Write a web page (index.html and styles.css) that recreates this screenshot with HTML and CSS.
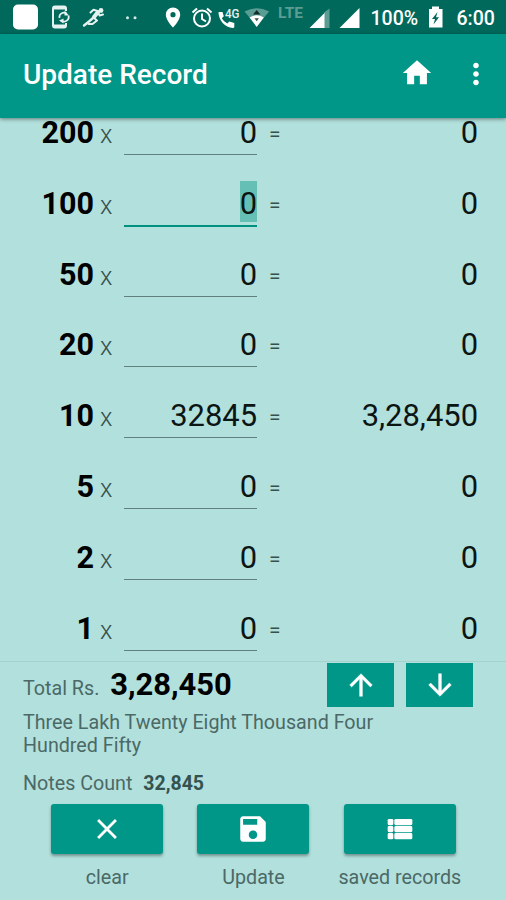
FILE: index.html
```html
<!DOCTYPE html>
<html lang="en">
<head>
    <meta charset="UTF-8">
    <meta name="viewport" content="width=device-width, initial-scale=1.0">
    <title>Update Record</title>
    <link rel="stylesheet" href="styles.css">
</head>
<body>
    <!-- status bar -->
    <div class="status-bar">
        <svg class="status-icons" width="506" height="34" viewBox="0 0 506 34">
            <rect x="13" y="4.5" width="25" height="25" rx="5" fill="#fff"/>
            <!-- phone sync -->
            <g fill="none" stroke="#e6f2f0" stroke-width="2">
                <path d="M66 11V8.500q0-2-2-2H55q-2 0-2 2V25.500q0 2 2 2h9q2 0 2-2V23"/>
                <path d="M53 8h13M53 26h13" stroke-width="3"/>
                <path d="M59.500 18a4.500 4.500 0 0 1 7-4.500M68.500 15.500a4.500 4.500 0 0 1-7 5" stroke-width="1.700"/>
            </g>
            <path d="M64.500 10.500v5h4.500zM63.500 18.500v5l-4.500-3z" fill="#e6f2f0"/>
            <!-- runner -->
            <g fill="none" stroke="#e6f2f0" stroke-linecap="round" stroke-linejoin="round">
                <path d="M90.500 12.500l3-2.800 4 1.300" stroke-width="2"/>
                <path d="M98 12l-4 5" stroke-width="4"/>
                <path d="M93 18l-4 3.500-5 4" stroke-width="2.400"/>
                <path d="M94 18l3 2.500-4.500 3.500h-4M98.500 13l1 2.500 3.500-1" stroke-width="2"/>
            </g>
            <circle cx="101" cy="10.500" r="2.400" fill="#e6f2f0"/>
            <circle cx="127.500" cy="17.800" r="1.500" fill="#d5e8e5"/>
            <circle cx="135" cy="17.800" r="1.500" fill="#d5e8e5"/>
            <!-- location -->
            <path fill="#fff" fill-rule="evenodd" d="M173 7.500a7.200 7.200 0 0 0-7.200 7.200c0 5.300 7.200 12.800 7.200 12.800s7.200-7.500 7.200-12.800A7.200 7.200 0 0 0 173 7.500zm0 4.600a2.600 2.600 0 1 1 0 5.200 2.600 2.600 0 0 1 0-5.200z"/>
            <!-- alarm -->
            <g fill="none" stroke="#fff" stroke-width="2">
                <circle cx="202" cy="18.500" r="8"/>
                <path d="M202 13.500v5.500l4 2.500M192.500 12.500l4.500-4M211.500 12.500l-4.500-4"/>
            </g>
            <!-- call on 4G -->
            <path fill="#fff" d="M219 12h3.500l1.300 4.200-2 2a13 13 0 0 0 5.500 5.300l2-2 5 1.500V27q0 1-1.500 1C225 27.500 219 20.500 218.500 13q0-1 .5-1z"/>
            <text class="net-4g" x="225" y="18" textLength="14.500" lengthAdjust="spacingAndGlyphs">4G</text>
            <!-- wifi -->
            <path fill="#5b9d93" d="M244.500 11.500q12.300-6.500 24.600 0l-5.500 6.500h-13.600z"/>
            <path fill="#fff" d="M249.500 17.500q7.200-4.500 14.400 0L256.700 27z"/>
            <path d="M253 14.500l3.700-4.500 3.700 4.500z" fill="#102d29"/>
            <path d="M254.500 18.300h4.400l-2.200 3z" fill="#38554f"/>
            <text class="net-lte" x="278" y="18" textLength="25" lengthAdjust="spacingAndGlyphs">LTE</text>
            <!-- signal -->
            <path fill="#5b9d93" d="M324 12.500l5.500-4V28H324z"/>
            <path fill="#fff" d="M309.500 28L324.500 13v15zM339.500 28L359.500 8v20z"/>
            <text class="status-text" x="370.500" y="25">100%</text>
            <!-- battery -->
            <path fill="#fff" d="M432 6.500h7V9h3.500v18.500H429V9h3z"/>
            <path fill="#00695c" d="M437.500 12l-5.500 7h3l-1.500 5.500 5.500-7.300h-3z"/>
            <text class="status-text" x="456.500" y="25">6:00</text>
        </svg>
    </div>

    <!-- app bar -->
    <div class="app-bar">
        <h1 class="title">Update Record</h1>
        <svg class="home" width="34" height="34" viewBox="0 0 24 24"><path fill="#fff" d="M10 20v-6h4v6h5v-8h3L12 3 2 12h3v8z"/></svg>
        <svg class="more" width="34" height="34" viewBox="0 0 24 24"><path fill="#fff" d="M12 8c1.100 0 2-.9 2-2s-.9-2-2-2-2 .9-2 2 .9 2 2 2zm0 2c-1.100 0-2 .9-2 2s.9 2 2 2 2-.9 2-2-.9-2-2-2zm0 6c-1.100 0-2 .9-2 2s.9 2 2 2 2-.9 2-2-.9-2-2-2z"/></svg>
    </div>

    <div class="notes-list">
        <div class="row"><b class="note">200</b><span class="times">x</span><span class="field">0</span><span class="equal">=</span><span class="amount">0</span></div>
        <div class="row"><b class="note">100</b><span class="times">x</span><span class="field active"><span class="selected">0</span></span><span class="equal">=</span><span class="amount">0</span></div>
        <div class="row"><b class="note">50</b><span class="times">x</span><span class="field">0</span><span class="equal">=</span><span class="amount">0</span></div>
        <div class="row"><b class="note">20</b><span class="times">x</span><span class="field">0</span><span class="equal">=</span><span class="amount">0</span></div>
        <div class="row"><b class="note">10</b><span class="times">x</span><span class="field">32845</span><span class="equal">=</span><span class="amount">3,28,450</span></div>
        <div class="row"><b class="note">5</b><span class="times">x</span><span class="field">0</span><span class="equal">=</span><span class="amount">0</span></div>
        <div class="row"><b class="note">2</b><span class="times">x</span><span class="field">0</span><span class="equal">=</span><span class="amount">0</span></div>
        <div class="row"><b class="note">1</b><span class="times">x</span><span class="field">0</span><span class="equal">=</span><span class="amount">0</span></div>
    </div>

    <div class="summary">
        <div class="total-row">
            <div class="total">Total Rs. <b class="total-value">3,28,450</b></div>
            <button class="arrow-btn"><svg width="34" height="34" viewBox="0 0 24 24"><path fill="#fff" stroke="#fff" stroke-width=".3" d="M4 12l1.410 1.410L11 7.830V20h2V7.830l5.580 5.590L20 12l-8-8-8 8z"/></svg></button>
            <button class="arrow-btn"><svg width="34" height="34" viewBox="0 0 24 24"><path fill="#fff" stroke="#fff" stroke-width=".3" d="M20 12l-1.410-1.410L13 16.170V4h-2v12.170l-5.580-5.590L4 12l8 8 8-8z"/></svg></button>
        </div>
        <p class="words">Three Lakh Twenty Eight Thousand Four Hundred Fifty</p>
        <p class="count">Notes Count <b class="count-value">32,845</b></p>
        <div class="actions">
            <div class="action">
                <button class="action-btn"><svg width="34" height="34" viewBox="0 0 24 24"><path fill="#fff" d="M19 6.410L17.590 5 12 10.590 6.410 5 5 6.410 10.590 12 5 17.590 6.410 19 12 13.410 17.590 19 19 17.590 13.410 12z"/></svg></button>
                <span class="action-label">clear</span>
            </div>
            <div class="action">
                <button class="action-btn"><svg width="34" height="34" viewBox="0 0 24 24"><path fill="#fff" d="M17 3H5c-1.110 0-2 .9-2 2v14c0 1.100.89 2 2 2h14c1.100 0 2-.9 2-2V7l-4-4zm-5 16c-1.660 0-3-1.340-3-3s1.340-3 3-3 3 1.340 3 3-1.340 3-3 3zm3-10H5V5h10v4z"/></svg></button>
                <span class="action-label">Update</span>
            </div>
            <div class="action">
                <button class="action-btn"><svg width="34" height="34" viewBox="0 0 24 24"><g fill="#fff"><rect x="3.300" y="4.900" width="4" height="4.400" rx="1"/><rect x="8" y="4.900" width="12.700" height="4.400" rx="1"/><rect x="3.300" y="9.900" width="4" height="4.400" rx="1"/><rect x="8" y="9.900" width="12.700" height="4.400" rx="1"/><rect x="3.300" y="14.900" width="4" height="4.400" rx="1"/><rect x="8" y="14.900" width="12.700" height="4.400" rx="1"/></g></svg></button>
                <span class="action-label">saved records</span>
            </div>
        </div>
    </div>
</body>
</html>
```

FILE: styles.css
```css
* {
    box-sizing: border-box;
}

body {
    font-family: Roboto, "Liberation Sans", sans-serif;
    background-color: #b2e0dc;
    color: #4b6966;
    margin: 0;
    height: 900px;
    overflow: hidden;
    display: flex;
    flex-direction: column;
}

.status-bar {
    height: 34px;
    background-color: #00695c;
}

.status-icons {
    display: block;
}

.status-text {
    fill: #fff;
    font-size: 19.5px;
    font-weight: 500;
}

.net-4g {
    fill: #e6f2f0;
    font-size: 13.5px;
    font-weight: 500;
}

.net-lte {
    fill: #5b9d93;
    font-size: 15px;
    font-weight: 700;
}

.app-bar {
    height: 84px;
    background-color: #009688;
    display: flex;
    align-items: center;
    padding: 0 13px 4px 23px;
    box-shadow: 0 1px 4px rgba(0, 0, 0, 0.45);
    z-index: 1;
}

.title {
    flex: 1;
    margin: 0;
    color: #fff;
    font-size: 28px;
    font-weight: 500;
}

.home {
    margin-right: 25px;
    margin-top: -2px;
}

.more {
    margin-top: -1px;
}

/* list of notes */
.notes-list {
    height: 543px;
    margin-top: -3px;
    margin-bottom: 3px;
}

.row {
    display: flex;
    align-items: baseline;
    height: 70.8px;
    font-size: 30.9px;
    line-height: 36px;
    color: #0b1514;
}

.note {
    width: 94px;
    text-align: right;
    font-size: 30.5px;
    color: #000;
}

.times {
    width: 30px;
    padding-left: 6px;
    font-size: 25.5px;
    font-weight: 300;
    color: #35504d;
}

.field {
    width: 133px;
    text-align: right;
    padding-bottom: 3px;
    border-bottom: 1px solid #5f807d;
}

.field.active {
    border-bottom: 2px solid #009080;
}

.selected {
    display: inline-block;
    margin-top: -5px;
    padding-top: 5px;
    background-color: #66bfb5;
}

.equal {
    width: 34px;
    padding-left: 12px;
    align-self: flex-start;
    font-size: 21px;
    line-height: 38px;
    color: #35504d;
}

.amount {
    flex: 1;
    text-align: right;
    padding-right: 28px;
}

/* bottom panel */
.summary {
    flex: 1;
    border-top: 1px solid #a6d2ce;
    font-size: 19.7px;
}

.total-row {
    display: flex;
    gap: 12px;
    height: 46px;
    padding: 1px 33px 0 23px;
}

.total {
    flex: 1;
    line-height: 44px;
}

.total-value {
    margin-left: 6px;
    font-size: 30.9px;
    color: #000;
}

.arrow-btn {
    width: 67px;
    height: 44px;
    border: none;
    padding: 0;
    background-color: #009688;
    display: flex;
    align-items: center;
    justify-content: center;
}

.words {
    width: 390px;
    margin: 3px 0 0 23px;
    line-height: 23px;
}

.count {
    margin: 15px 0 0 23px;
    line-height: 23px;
}

.count-value {
    margin-left: 6px;
    font-size: 19.5px;
    color: #35524f;
}

.actions {
    display: flex;
    margin: 9px 33px 0 34px;
}

.action {
    flex: 1;
    display: flex;
    flex-direction: column;
    align-items: center;
}

.action-btn {
    width: 112px;
    height: 50px;
    border: none;
    border-radius: 3px;
    padding: 0;
    background-color: #009688;
    box-shadow: 0 2px 3px rgba(0, 0, 0, 0.35);
    display: flex;
    align-items: center;
    justify-content: center;
}

.action-label {
    margin-top: 12px;
    line-height: 23px;
}
```
